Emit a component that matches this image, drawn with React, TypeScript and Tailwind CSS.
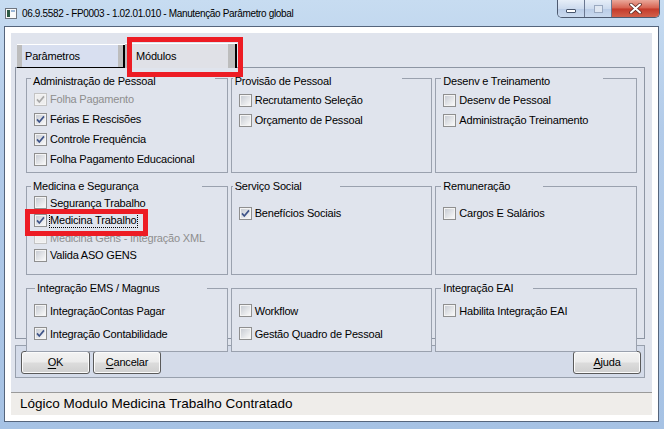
import React from 'react';

type Opt = { label: string; checked?: boolean; disabled?: boolean; focus?: boolean };

type Box = {
  title?: string;
  lbl?: string;
  pad: string;
  rowH: string;
  mark?: boolean;
  items: Opt[];
};

const boxes: Box[] = [
  {
    title: 'Administração de Pessoal',
    lbl: '-top-[4px] left-[4px] w-[184px]',
    pad: 'pt-[10px]',
    rowH: 'h-[20px]',
    items: [
      { label: 'Folha Pagamento', checked: true, disabled: true },
      { label: 'Férias E Rescisões', checked: true },
      { label: 'Controle Frequência', checked: true },
      { label: 'Folha Pagamento Educacional' },
    ],
  },
  {
    title: 'Provisão de Pessoal',
    lbl: '-top-[4px] left-[1px] w-[169px]',
    pad: 'pt-[11px]',
    rowH: 'h-[20px]',
    items: [{ label: 'Recrutamento Seleção' }, { label: 'Orçamento de Pessoal' }],
  },
  {
    title: 'Desenv e Treinamento',
    lbl: '-top-[4px] left-[5px] w-[162px]',
    pad: 'pt-[11px]',
    rowH: 'h-[20px]',
    items: [{ label: 'Desenv de Pessoal' }, { label: 'Administração Treinamento' }],
  },
  {
    title: 'Medicina e Segurança',
    lbl: '-top-[7px] left-[4px] w-[171px]',
    pad: 'pt-[7px]',
    rowH: 'h-[17.5px]',
    mark: true,
    items: [
      { label: 'Segurança Trabalho' },
      { label: 'Medicina Trabalho', checked: true, focus: true },
      { label: 'Medicina Gens - Integração XML', disabled: true },
      { label: 'Valida ASO GENS' },
    ],
  },
  {
    title: 'Serviço Social',
    lbl: '-top-[7px] left-[1px] w-[107px]',
    pad: 'pt-[16px]',
    rowH: 'h-[20px]',
    items: [{ label: 'Benefícios Sociais', checked: true }],
  },
  {
    title: 'Remuneração',
    lbl: '-top-[7px] left-[5px] w-[102px]',
    pad: 'pt-[16px]',
    rowH: 'h-[20px]',
    items: [{ label: 'Cargos E Salários' }],
  },
  {
    title: 'Integração EMS / Magnus',
    lbl: '-top-[7px] left-[8px] w-[172px]',
    pad: 'pt-[10px]',
    rowH: 'h-[23px]',
    items: [{ label: 'IntegraçãoContas Pagar' }, { label: 'Integração Contabilidade', checked: true }],
  },
  {
    pad: 'pt-[10px]',
    rowH: 'h-[23px]',
    items: [{ label: 'Workflow' }, { label: 'Gestão Quadro de Pessoal' }],
  },
  {
    title: 'Integração EAI',
    lbl: '-top-[7px] left-[5px] w-[92px]',
    pad: 'pt-[10px]',
    rowH: 'h-[23px]',
    items: [{ label: 'Habilita Integração EAI' }],
  },
];

function CheckBox({ checked, disabled }: { checked?: boolean; disabled?: boolean }) {
  return (
    <svg width="13" height="13" viewBox="0 0 13 13" className="shrink-0">
      <defs>
        <linearGradient id="cbIn" x1="0" y1="0" x2="1" y2="1">
          <stop offset="0" stopColor="#c9cdd4" />
          <stop offset="1" stopColor="#f8f8f8" />
        </linearGradient>
      </defs>
      <rect x="0.5" y="0.5" width="12" height="12" fill="#f4f4f4" stroke={disabled ? '#c4c4c4' : '#8f8f8f'} />
      <rect x="2" y="2" width="9" height="9" fill={disabled ? '#eeeeee' : 'url(#cbIn)'} />
      {checked && (
        <path
          d="M3 6.4 L5.3 9 L10 3.4"
          fill="none"
          stroke={disabled ? '#a8a8a8' : '#3f5488'}
          strokeWidth="1.7"
        />
      )}
    </svg>
  );
}

function GroupBox({ box }: { box: Box }) {
  return (
    <div className={`relative flex flex-col border border-[#9aa1ae] bg-[#e0e4ed] pl-[7px] ${box.pad}`}>
      {box.title && (
        <div className={`absolute bg-[#e0e4ed] pl-[2px] leading-[13px] ${box.lbl}`}>{box.title}</div>
      )}
      {box.items.map((it) => (
        <div key={it.label} className={`flex items-center gap-[3px] ${box.rowH}`}>
          <CheckBox checked={it.checked} disabled={it.disabled} />
          <span
            className={`whitespace-nowrap leading-[14px] ${it.disabled ? 'text-[#8e8e8e]' : 'text-black'} ${
              it.focus ? 'outline outline-1 outline-dotted outline-black' : ''
            }`}
          >
            {it.label}
          </span>
        </div>
      ))}
      {box.mark && (
        <div className="absolute left-[-2px] top-[22px] z-10 h-[27px] w-[123px] border-[5px] border-[#ed1c24]" />
      )}
    </div>
  );
}

function WinButton({ label, className }: { label: string; className?: string }) {
  return (
    <button
      className={`flex h-[23px] w-[68px] items-center justify-center rounded-[3px] border border-[#5a5a5a] bg-[linear-gradient(#f3f3f3,#ebebeb_48%,#dcdcdc_52%,#cfcfcf)] shadow-[inset_0_0_0_1px_#fbfbfb] ${className ?? ''}`}
    >
      <span className="underline decoration-1 underline-offset-2">{label[0]}</span>
      <span>{label.slice(1)}</span>
    </button>
  );
}

export default function App() {
  return (
    <div className="flex h-[429px] w-[664px] flex-col overflow-hidden bg-[linear-gradient(180deg,#c7dcf1,#b2cbe9_30%,#a6c2e4)] pb-[7px] pl-[4px] pr-[5px] font-['Liberation_Sans',Arial,sans-serif] text-[11px] tracking-[-0.2px] text-black">
      {/* title bar */}
      <div className="flex h-[26px] shrink-0 items-start">
        <div className="flex h-[26px] items-center pl-[1px]">
          <svg width="12" height="11" viewBox="0 0 12 11">
            <rect x="0.5" y="0.5" width="11" height="10" fill="#fafafa" stroke="#6f7680" />
            <rect x="2" y="2" width="3" height="7" fill="#2d5b45" />
            <rect x="6" y="2" width="4" height="2" fill="#9db8d8" />
          </svg>
          <span className="ml-[5px] text-[10px] tracking-[-0.35px] text-black">
            06.9.5582 - FP0003 - 1.02.01.010 - Manutenção Parâmetro global
          </span>
        </div>
        <div className="ml-auto mr-[-1px] flex h-[18px] overflow-hidden rounded-b-[5px] border border-t-0 border-[#4d5a70]">
          <div className="flex w-[27px] items-center justify-center border-r border-[#6a7790] bg-[linear-gradient(#e6eef8,#cddbee_50%,#b9cce6_51%,#c9d9ee)]">
            <div className="mt-[5px] h-[4px] w-[10px] rounded-[1px] border border-[#48566d] bg-white" />
          </div>
          <div className="flex w-[27px] items-center justify-center border-r border-[#6a7790] bg-[linear-gradient(#e6eef8,#cddbee_50%,#b9cce6_51%,#c9d9ee)]">
            <div className="h-[8px] w-[9px] border border-[#9aa9c0] bg-[#dfe7f2]" />
          </div>
          <div className="flex w-[47px] items-center justify-center bg-[linear-gradient(#eaa89a,#d6614f_48%,#c43a2a_52%,#d2604a)]">
            <svg width="13" height="11" viewBox="0 0 13 11">
              <path d="M2 1.5 L11 9.5 M11 1.5 L2 9.5" stroke="#5a2a24" strokeWidth="3.6" strokeLinecap="round" />
              <path d="M2 1.5 L11 9.5 M11 1.5 L2 9.5" stroke="#ffffff" strokeWidth="2" strokeLinecap="round" />
            </svg>
          </div>
        </div>
      </div>

      {/* client */}
      <div className="flex flex-1 flex-col border border-[#55657c] bg-white p-[6px]">
        <div className="relative flex flex-1 flex-col bg-[#e0e4ed]">
          {/* tabs */}
          <div className="flex h-[35px] shrink-0 items-end pl-[6px]">
            <div className="relative z-10 flex h-[24px] w-[108px] border-b border-t border-b-black border-t-white">
              <div className="w-[5px] bg-[#bdbdbd]" />
              <div className="flex flex-1 items-center bg-[#d8dff0] pl-[3px]">Parâmetros</div>
              <div className="w-[5px] bg-[#bdbdbd]" />
              <div className="w-[2px] bg-black" />
            </div>
            <div className="relative z-10 flex h-[25px] w-[112px] border-t border-white">
              <div className="w-[2px] bg-[#bdbdbd]" />
              <div className="flex flex-1 items-center bg-[#e0e1e7] pl-[9px]">Módulos</div>
              <div className="w-[7px] bg-[#bdbdbd]" />
              <div className="w-[2px] bg-black" />
            </div>
          </div>

          {/* tab page */}
          <div className="ml-[4px] mr-[7px] -mt-[1px] h-[272px] shrink-0 border border-[#8d95a3] pl-[10px] pr-[7px] pt-[10px]">
            <div className="grid grid-cols-3 grid-rows-[95px_89px_64px] gap-x-[3px] gap-y-[13px]">
              {boxes.map((b, i) => (
                <GroupBox key={i} box={b} />
              ))}
            </div>
          </div>

          {/* buttons */}
          <div className="ml-[4px] mr-[7px] mt-[6px] flex h-[33px] shrink-0 items-start gap-[3px] border border-[#98a0ad] bg-[#d4dbe9] pl-[5px] pr-[3px] pt-[5px]">
            <WinButton label="OK" className="w-[69px]" />
            <WinButton label="Cancelar" />
            <WinButton label="Ajuda" className="ml-auto" />
          </div>

          {/* red highlight on tab */}
          <div className="absolute left-[116px] top-[4px] z-20 h-[40px] w-[116px] border-[5px] border-[#ed1c24]" />
        </div>

        {/* status bar */}
        <div className="flex h-[23px] shrink-0 items-center border-t border-[#9a9a9a] bg-[#efedea] pl-[9px] text-[13.5px] tracking-normal">
          Lógico Modulo Medicina Trabalho Contratado
        </div>
      </div>
    </div>
  );
}
